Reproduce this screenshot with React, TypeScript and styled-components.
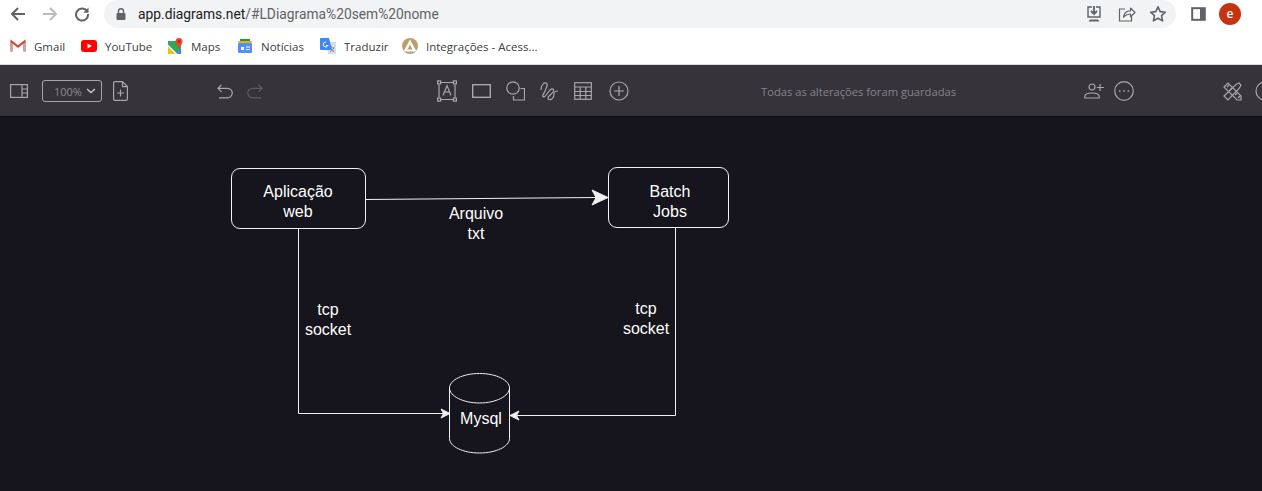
import React from 'react';
import styled, { createGlobalStyle } from 'styled-components';

const GlobalStyle = createGlobalStyle`
  html, body {
    margin: 0;
    padding: 0;
    background: #16141c;
  }
`;

const CHROME_FONT = `'Open Sans', 'Noto Sans', sans-serif`;

const Page = styled.div`
  display: flex;
  flex-direction: column;
  width: 1262px;
  height: 491px;
  overflow: hidden;
  font-family: ${CHROME_FONT};
`;

const AddressRow = styled.div`
  display: flex;
  align-items: center;
  flex: none;
  height: 28px;
  background: #fff;
`;

const NavButton = styled.div`
  display: flex;
  align-items: center;
  justify-content: center;
  flex: none;
  width: 32px;
  height: 28px;
`;

const NavGroup = styled.div`
  display: flex;
  flex: none;
  margin-left: 2px;
  margin-right: 6px;
`;

const Omnibox = styled.div`
  display: flex;
  align-items: center;
  flex: none;
  width: 1072px;
  height: 28px;
  padding: 0 8px 0 10px;
  box-sizing: border-box;
  border-radius: 14px;
  background: #f1f3f4;
`;

const Url = styled.span`
  flex: 1;
  margin-left: 10px;
  font-family: Roboto, 'Open Sans', sans-serif;
  font-size: 13.8px;
  color: #5f6368;
  white-space: nowrap;
`;

const UrlHost = styled.span`
  color: #202124;
`;

const OmniboxActions = styled.div`
  display: flex;
  gap: 12px;
`;

const RightActions = styled.div`
  display: flex;
  align-items: center;
  flex: none;
  margin-left: 15px;
`;

const Avatar = styled.div`
  display: flex;
  align-items: center;
  justify-content: center;
  width: 22px;
  height: 22px;
  margin-left: 12px;
  border-radius: 50%;
  background: #c5330f;
  color: #fff;
  font-size: 12px;
  font-weight: 600;
  line-height: 1;
`;

const MenuDots = styled.div`
  display: flex;
  flex-direction: column;
  gap: 2px;
  margin-left: 21px;
`;

const MenuDot = styled.i`
  display: block;
  width: 3px;
  height: 3px;
  background: #5f6368;
`;

const BookmarksBar = styled.div`
  display: flex;
  align-items: center;
  flex: none;
  height: 37px;
  padding-left: 10px;
  box-sizing: border-box;
  background: #fff;
  border-bottom: 1px solid #d8dadd;
`;

const Bookmark = styled.div<{ $width: number }>`
  display: flex;
  align-items: center;
  flex: none;
  width: ${(p) => p.$width}px;
  font-size: 11.5px;
  color: #3c4043;
  white-space: nowrap;

  svg {
    flex: none;
    margin-right: 8px;
  }
`;

const Toolbar = styled.div`
  display: flex;
  align-items: center;
  flex: none;
  height: 52px;
  padding: 1px 0 0 10px;
  box-sizing: border-box;
  background: #36333a;
  border-bottom: 1px solid #0c0b0e;
  color: #b3b3b3;
`;

const ToolGroup = styled.div<{ $left: number; $gap: number }>`
  display: flex;
  align-items: center;
  flex: none;
  margin-left: ${(p) => p.$left}px;
  gap: ${(p) => p.$gap}px;
`;

const ZoomSelect = styled.div`
  display: flex;
  align-items: center;
  justify-content: space-between;
  width: 60px;
  height: 22px;
  padding: 0 5px 0 11px;
  box-sizing: border-box;
  border: 1px solid #a6a6a6;
  border-radius: 3px;
  font-size: 11px;
  color: #8d8b8f;
`;

const SaveStatus = styled.span`
  flex: none;
  width: 320px;
  margin-left: 132px;
  font-size: 11.2px;
  color: #85838a;
  white-space: nowrap;
`;

const Canvas = styled.div`
  position: relative;
  flex: 1;
  background: #16141c;
`;

const Connectors = styled.svg`
  position: absolute;
  inset: 0;
`;

const Node = styled.div<{ $x: number; $y: number; $w: number; $h: number; $pad: string }>`
  position: absolute;
  left: ${(p) => p.$x}px;
  top: ${(p) => p.$y}px;
  width: ${(p) => p.$w}px;
  height: ${(p) => p.$h}px;
  display: flex;
  align-items: center;
  justify-content: center;
  padding: ${(p) => p.$pad};
  box-sizing: border-box;
  border: 1px solid #f0f0f0;
  border-radius: 9px;
  font-family: 'Liberation Sans', Arial, sans-serif;
  font-size: 16px;
  line-height: 20px;
  color: #fff;
  text-align: center;
`;

const EdgeLabel = styled.div<{ $cx: number; $y: number }>`
  position: absolute;
  left: ${(p) => p.$cx - 50}px;
  top: ${(p) => p.$y}px;
  width: 100px;
  font-family: 'Liberation Sans', Arial, sans-serif;
  font-size: 16px;
  line-height: 20px;
  color: #fff;
  text-align: center;
`;

const ChromeIcon = ({ size = 16, children }: { size?: number; children: React.ReactNode }) => (
  <svg width={size} height={size} viewBox={`0 0 ${size} ${size}`} fill="none">
    {children}
  </svg>
);

const ToolIcon = ({ w, h, children }: { w: number; h: number; children: React.ReactNode }) => (
  <svg width={w} height={h} viewBox={`0 0 ${w} ${h}`} fill="none" stroke="#a8a8a8" strokeWidth="1.2" style={{ flex: 'none', display: 'block' }}>
    {children}
  </svg>
);

function BrowserChrome() {
  return (
    <>
      <AddressRow>
        <NavGroup>
          <NavButton>
            <ChromeIcon>
              <path d="M15 8H2.500M8 2 2 8l6 6" stroke="#5f6368" strokeWidth="2" />
            </ChromeIcon>
          </NavButton>
          <NavButton>
            <ChromeIcon>
              <path d="M1 8h12.500M8 2l6 6-6 6" stroke="#b9bbbe" strokeWidth="2" />
            </ChromeIcon>
          </NavButton>
          <NavButton>
            <ChromeIcon>
              <path d="M13 5.200A6 6 0 1 0 14 8" stroke="#5f6368" strokeWidth="2" />
              <path d="M14.500 1.500v5.200H9.300z" fill="#5f6368" />
            </ChromeIcon>
          </NavButton>
        </NavGroup>
        <Omnibox>
          <ChromeIcon size={14}>
            <rect x="2.500" y="6" width="9" height="7" rx="1" fill="#5f6368" />
            <path d="M4.500 6V4.200a2.500 2.500 0 0 1 5 0V6" stroke="#5f6368" strokeWidth="1.400" />
          </ChromeIcon>
          <Url>
            <UrlHost>app.diagrams.net</UrlHost>/#LDiagrama%20sem%20nome
          </Url>
          <OmniboxActions>
            <ChromeIcon size={20}>
              <path d="M8 3H4v10h12V3h-4" stroke="#5f6368" strokeWidth="1.400" />
              <path d="M10 2v7.500M7 7l3 3 3-3" stroke="#5f6368" strokeWidth="1.800" />
              <path d="M6 15.500h8l1.500 2h-11z" fill="#5f6368" />
            </ChromeIcon>
            <ChromeIcon size={20}>
              <path d="M9 5H3.500v12h12v-5" stroke="#5f6368" strokeWidth="1.200" />
              <path d="M7.500 13c.5-4 3-6.200 7-6.200V4l4.500 4.500-4.500 4.200V10c-3 0-5 1-7 3z" stroke="#5f6368" strokeWidth="1.200" strokeLinejoin="round" />
            </ChromeIcon>
            <ChromeIcon size={20}>
              <path d="m10 2.800 2.200 4.800 5.200.6-3.900 3.500 1.100 5.200-4.600-2.600-4.600 2.600 1.100-5.200-3.900-3.500 5.200-.6z" stroke="#5f6368" strokeWidth="1.600" strokeLinejoin="round" />
            </ChromeIcon>
          </OmniboxActions>
        </Omnibox>
        <RightActions>
          <ChromeIcon size={16}>
            <rect x="1.200" y="2.200" width="12.600" height="11.600" stroke="#5f6368" strokeWidth="2" />
            <rect x="9" y="2" width="5" height="12" fill="#5f6368" />
          </ChromeIcon>
          <Avatar>e</Avatar>
          <MenuDots>
            <MenuDot />
            <MenuDot />
            <MenuDot />
          </MenuDots>
        </RightActions>
      </AddressRow>
      <BookmarksBar>
        <Bookmark $width={71}>
          <ChromeIcon size={16}>
            <path d="M1.500 13.500V3.500l6.500 5 6.500-5v10" stroke="#d4483b" strokeWidth="2.200" />
            <path d="M1.500 14V5M14.500 14V5" stroke="#b5b5b5" strokeWidth="1.400" />
          </ChromeIcon>
          Gmail
        </Bookmark>
        <Bookmark $width={86}>
          <ChromeIcon size={16}>
            <rect x="0" y="2" width="16" height="12" rx="3" fill="#f00" />
            <path d="M6.500 5.500v5L11 8z" fill="#fff" />
          </ChromeIcon>
          YouTube
        </Bookmark>
        <Bookmark $width={70}>
          <ChromeIcon size={16}>
            <path d="M1 3h13v13H1z" fill="#34a853" />
            <path d="M1 16V9l7 7z" fill="#fbbc04" />
            <path d="M8 16l6-6v6z" fill="#4285f4" />
            <path d="M1 9 8 16h2.500L1 6.500z" fill="#f1f3f4" />
            <path d="M12 0a3.500 3.500 0 0 1 3.500 3.500C15.500 6 12 10 12 10S8.500 6 8.500 3.500A3.500 3.500 0 0 1 12 0z" fill="#ea4335" />
            <circle cx="12" cy="3.500" r="1.200" fill="#a52714" />
          </ChromeIcon>
          Maps
        </Bookmark>
        <Bookmark $width={83}>
          <ChromeIcon size={16}>
            <path d="M3 1h10v5H3z" fill="#0c9d58" />
            <path d="M1 3h14l-.5 2h-13z" fill="#f9ab00" />
            <rect x="1" y="5" width="14" height="10" rx="1" fill="#4d90fe" />
            <path d="M4 9h3v3H4zM9 8.500h4v1H9zM9 11h4v1H9z" fill="#fff" />
          </ChromeIcon>
          Notícias
        </Bookmark>
        <Bookmark $width={82}>
          <ChromeIcon size={16}>
            <path d="M7 4h8a1 1 0 0 1 1 1v10a1 1 0 0 1-1 1H8z" fill="#d9dcdf" />
            <path d="M1 0h8l3 12H1a1 1 0 0 1-1-1V1a1 1 0 0 1 1-1z" fill="#4285f4" />
            <path d="M6 4a2.500 2.500 0 1 0 2 3.500H6" stroke="#fff" strokeWidth="1" />
            <path d="m11 8 1 2 2-.2-1.200 1.700.7 2-1.900-.9-1.600 1" stroke="#8a8f94" strokeWidth="1" />
          </ChromeIcon>
          Traduzir
        </Bookmark>
        <Bookmark $width={140}>
          <ChromeIcon size={16}>
            <circle cx="8" cy="8" r="8" fill="#b9a06c" />
            <path d="M8 1.500 14.500 13.500H1.500z" fill="#fff" />
            <path d="M8 6.500l2.500 5h-5z" fill="#b9a06c" />
          </ChromeIcon>
          Integrações - Acess...
        </Bookmark>
      </BookmarksBar>
    </>
  );
}

function EditorToolbar() {
  return (
    <Toolbar>
      <ToolIcon w={18} h={14}>
        <rect x=".6" y=".6" width="16.800" height="12.800" />
        <path d="M12 .6v12.800M12 5h5.400M12 9h5.400" />
      </ToolIcon>
      <ToolGroup $left={14} $gap={11}>
        <ZoomSelect>
          100%
          <svg width="10" height="6" viewBox="0 0 10 6" fill="none">
            <path d="m1 1 4 3.500L9 1" stroke="#c8c8c8" strokeWidth="1.400" />
          </svg>
        </ZoomSelect>
        <ToolIcon w={15} h={20}>
          <path d="M.6 2A1.400 1.400 0 0 1 2 .6h7.500l4.900 4.900V18a1.400 1.400 0 0 1-1.400 1.400H2A1.400 1.400 0 0 1 .6 18z" />
          <path d="M9.500.6v5h4.900M7.500 8.500v7M4 12h7" />
        </ToolIcon>
      </ToolGroup>
      <ToolGroup $left={89} $gap={14}>
        <ToolIcon w={16} h={15}>
          <path d="M4.500 .8 1 4.300l3.500 3.500M1 4.300h9.500a4.500 4.500 0 0 1 0 9.500H2" />
        </ToolIcon>
        <ToolIcon w={16} h={15}>
          <path d="m11.500 .8 3.500 3.500-3.500 3.500M15 4.300H5.500a4.500 4.500 0 0 0 0 9.500H14" stroke="#5f5d62" />
        </ToolIcon>
      </ToolGroup>
      <ToolGroup $left={174} $gap={15}>
        <ToolIcon w={20} h={22}>
          <path d="M4 2.500h12M4 19.500h12M2 4.500v13M18 4.500v13" />
          <rect x=".6" y=".9" width="3" height="3" />
          <rect x="16.400" y=".9" width="3" height="3" />
          <rect x=".6" y="18.100" width="3" height="3" />
          <rect x="16.400" y="18.100" width="3" height="3" />
          <path d="m6 15.500 4-10 4 10M7.400 12h5.200" />
        </ToolIcon>
        <ToolIcon w={19} h={14}>
          <rect x=".7" y=".7" width="17.600" height="12.600" strokeWidth="1.400" />
        </ToolIcon>
        <ToolIcon w={19} h={20}>
          <circle cx="7" cy="7" r="6.200" />
          <path d="M14.500 7.500h4v11.500H7.500v-4" />
        </ToolIcon>
        <ToolIcon w={19} h={20}>
          <path d="M1 9C1 4 4 1 6 2 9 3 5 10 3 14c-1 2 1 3 3 0l4-5c2-2 5-1 3 2-2 3-5 4-5 6 0 3 6 2 6-4 0-2 2-3 4-3" />
        </ToolIcon>
        <ToolIcon w={20} h={18}>
          <rect x=".7" y=".7" width="16.600" height="16.600" />
          <path d="M.7 5h16.600M.7 9.500h16.600M.7 13.500h16.600M6.200 5v12.300M11.800 5v12.300" />
        </ToolIcon>
        <ToolIcon w={20} h={20}>
          <circle cx="10" cy="10" r="9" />
          <path d="M10 5v10M5 10h10" />
        </ToolIcon>
      </ToolGroup>
      <SaveStatus>Todas as alterações foram guardadas</SaveStatus>
      <ToolGroup $left={3} $gap={10}>
        <ToolIcon w={20} h={16}>
          <circle cx="8" cy="4" r="3" />
          <path d="M.8 15v-1.500c0-2.500 3-3.500 7.200-3.500s7.200 1 7.200 3.500V15z" />
          <path d="M16 1v7M12.800 4.500H20" />
        </ToolIcon>
        <ToolIcon w={20} h={20}>
          <circle cx="10" cy="10" r="9.300" />
          <path d="M5 10h1.500M9.300 10h1.500M13.600 10h1.500" strokeWidth="1.600" />
        </ToolIcon>
      </ToolGroup>
      <ToolGroup $left={89} $gap={13}>
        <ToolIcon w={19} h={19}>
          <path d="m1 5 4-4 13 13v4h-4z" />
          <path d="m13 2.500 3-1.500 2 2-1.500 3L5 18l-4-4z" />
          <path d="m4 5 2-2M7 8l2-2M12 13l2-2M15 16l2-2" />
        </ToolIcon>
        <ToolIcon w={20} h={20}>
          <circle cx="10" cy="10" r="9" />
          <path d="M10 1v9l6 5" />
        </ToolIcon>
      </ToolGroup>
    </Toolbar>
  );
}

function Diagram() {
  return (
    <Canvas>
      <Connectors width="1262" height="374" viewBox="0 117 1262 374" fill="none">
        <path d="M366 199.500 596 197.500" stroke="#f0f0f0" strokeWidth="1.100" />
        <path d="M608 197.500 592 205 596 197.600 592 190z" fill="#f0f0f0" stroke="#f0f0f0" />
        <path d="M298.500 229V413.500H444" stroke="#f0f0f0" />
        <path d="M450 413.500 441 418 443.500 413.500 441 409z" fill="#f0f0f0" stroke="#f0f0f0" />
        <path d="M675.500 228V415.500H516" stroke="#f0f0f0" />
        <path d="M510 415.500 519 411 516.500 415.500 519 420z" fill="#f0f0f0" stroke="#f0f0f0" />
        <path d="M449.500 388C449.500 380 463 373.500 479.500 373.500S509.500 380 509.500 388V438.500C509.500 446.500 496 453 479.500 453S449.500 446.500 449.500 438.500z" stroke="#f0f0f0" />
        <path d="M449.500 388C449.500 396 463 403 479.500 403S509.500 396 509.500 388" stroke="#f0f0f0" />
      </Connectors>
      <Node $x={231} $y={51} $w={135} $h={61} $pad="6px 1px 0 0">
        Aplicação
        <br />
        web
      </Node>
      <Node $x={608} $y={50} $w={121} $h={61} $pad="8px 0 0 3px">
        Batch
        <br />
        Jobs
      </Node>
      <EdgeLabel $cx={476} $y={87}>
        Arquivo
        <br />
        txt
      </EdgeLabel>
      <EdgeLabel $cx={328} $y={183}>
        tcp
        <br />
        socket
      </EdgeLabel>
      <EdgeLabel $cx={646} $y={182}>
        tcp
        <br />
        socket
      </EdgeLabel>
      <EdgeLabel $cx={481} $y={292}>
        Mysql
      </EdgeLabel>
    </Canvas>
  );
}

export default function App() {
  return (
    <Page>
      <GlobalStyle />
      <BrowserChrome />
      <EditorToolbar />
      <Diagram />
    </Page>
  );
}
